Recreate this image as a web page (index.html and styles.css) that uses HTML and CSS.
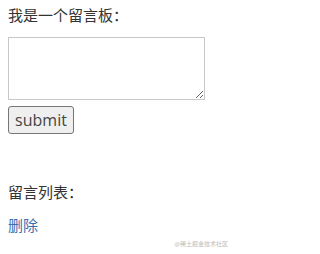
FILE: index.html
```html
<!DOCTYPE html>
<html>
<head>
<meta charset="utf-8">
<link rel="stylesheet" href="styles.css">
</head>
<body>
<div class="title">我是一个留言板：</div>
<form class="form">
<textarea class="box"></textarea>
<button type="button" class="btn">submit</button>
</form>
<div class="list-title">留言列表：</div>
<a class="del" href="#">删除</a>
<div class="mark">@稀土掘金技术社区</div>
</body>
</html>
```
FILE: styles.css
```css
html, body { margin: 0; padding: 0; }
body {
  padding: 8px;
  font-family: "Open Sans", "Noto Sans CJK SC", sans-serif;
  font-size: 15px;
  color: #333;
  position: relative;
  width: 235px;
  height: 254px;
  box-sizing: border-box;
  overflow: hidden;
}
.title { line-height: 15px; }
.form { display: flex; flex-direction: column; align-items: flex-start; gap: 6px; margin-top: 14px; }
.box {
  width: 197px; height: 63px; box-sizing: border-box;
  border: 1px solid #c8c8c8; margin: 0; padding: 2px;
  resize: both;
}
.btn {
  width: 66px; height: 28px; box-sizing: border-box;
  font-family: "Open Sans", sans-serif; font-size: 16px; color: #444;
  background: #efefef; border: 1px solid #767676; border-radius: 3px;
  padding: 0; margin: 0;
}
.list-title { margin-top: 51px; line-height: 15px; }
.del { display: block; margin-top: 18px; line-height: 15px; color: #3a6fb0; text-decoration: none; }
.mark { position: absolute; right: 7px; bottom: 6px; font-size: 6px; color: #bbb; }
```
